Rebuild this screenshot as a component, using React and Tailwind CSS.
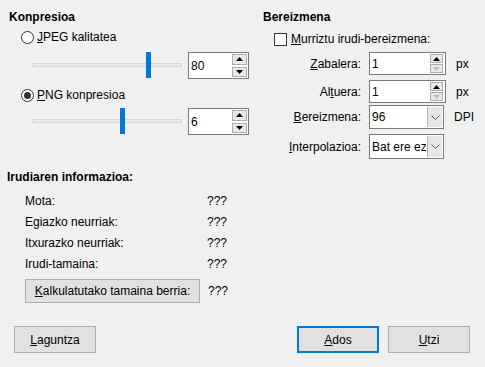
const Arrow = ({ up, muted }) => (
  <svg width="7" height="4" viewBox="0 0 7 4" className="block">
    <path d={up ? "M0 4 L3.5 0 L7 4 Z" : "M0 0 L3.5 4 L7 0 Z"} fill={muted ? "#bfbfbf" : "#000"} />
  </svg>
);

const Chevron = () => (
  <svg width="9" height="5" viewBox="0 0 9 5" className="block">
    <path d="M0.5 0.5 L4.5 4.5 L8.5 0.5" fill="none" stroke="#606060" strokeWidth="1" />
  </svg>
);

const SpinBox = ({ value, big }) => (
  <div
    className={
      big
        ? "flex h-[27px] w-[61px] border border-[#7a7a7a] bg-white"
        : "flex h-[23px] w-[77px] border border-[#7a7a7a] bg-white"
    }
  >
    <span className="flex flex-1 items-center pl-[2px] text-[12px]">{value}</span>
    <div className={big ? "flex w-[16px] flex-col gap-[2px] py-[1px] pr-[1px]" : "flex w-[15px] flex-col gap-[1px] py-[1px] pr-[2px]"}>
      <div className="flex flex-1 items-center justify-center border border-[#adadad] bg-[#e8e8e8]">
        <Arrow up />
      </div>
      <div className="flex flex-1 items-center justify-center border border-[#adadad] bg-[#e8e8e8]">
        <Arrow muted={!big} />
      </div>
    </div>
  </div>
);

const Dropdown = ({ value, height }) => (
  <div className={`flex w-[75px] border border-[#7a7a7a] bg-white ${height}`}>
    <span className="flex flex-1 items-center overflow-hidden whitespace-nowrap pl-[2px]">{value}</span>
    <div className="m-[1px] flex w-[15px] items-center justify-center border-l border-[#b5b5b5] bg-[#e6e6e6]">
      <Chevron />
    </div>
  </div>
);

const Slider = ({ pos }) => (
  <div className="relative h-[27px] w-[150px]">
    <div className="absolute left-0 right-0 top-[11px] h-[4px] border border-[#d6d6d6] bg-[#e7eaea]" />
    <div className="absolute top-0 h-[26px] w-[5px] bg-[#0078d7]" style={{ left: pos }} />
  </div>
);

const Radio = ({ checked }) => (
  <span className="flex h-[13px] w-[13px] items-center justify-center rounded-full border border-[#333] bg-white">
    {checked ? <span className="h-[7px] w-[7px] rounded-full bg-[#333]" /> : null}
  </span>
);

const FieldRow = ({ label, children, unit, className }) => (
  <div className={`flex items-center ${className}`}>
    <span className="w-[98px] text-right">{label}</span>
    <div className="ml-[8px]">{children}</div>
    {unit ? <span className="ml-[10px]">{unit}</span> : null}
  </div>
);

const Button = ({ children, primary, className = "" }) => (
  <button
    type="button"
    className={`h-[27px] w-[82px] bg-[#e1e1e1] text-[12px] ${
      primary ? "border-2 border-[#0078d7]" : "border border-[#adadad]"
    } ${className}`}
  >
    {children}
  </button>
);

const infoRows = ["Mota:", "Egiazko neurriak:", "Itxurazko neurriak:", "Irudi-tamaina:"];

export default function App() {
  return (
    <div className="h-[367px] w-[485px] overflow-hidden bg-[#f0f0f0] font-['Liberation_Sans',sans-serif] text-[12px] leading-4 text-black">
      <div className="flex h-[159px]">
        <div className="w-[263px] pl-[9px]">
          <div className="mt-[9px] h-4 font-bold">Konpresioa</div>
          <div className="mt-[4px] flex h-4 items-center gap-[3px] pl-[12px]">
            <Radio />
            <span>
              <u>J</u>PEG kalitatea
            </span>
          </div>
          <div className="mt-[7px] flex items-center gap-[6px] pl-[23px]">
            <Slider pos={114} />
            <SpinBox value="80" big />
          </div>
          <div className="mt-[8px] flex h-4 items-center gap-[3px] pl-[12px]">
            <Radio checked />
            <span>
              <u>P</u>NG konpresioa
            </span>
          </div>
          <div className="mt-[5px] flex items-center gap-[6px] pl-[23px]">
            <Slider pos={88} />
            <SpinBox value="6" big />
          </div>
        </div>
        <div className="flex-1">
          <div className="mt-[9px] h-4 font-bold">Bereizmena</div>
          <div className="mt-[6px] flex h-4 items-center gap-[4px] pl-[11px]">
            <span className="h-[13px] w-[13px] border border-[#333] bg-white" />
            <span>
              <u>M</u>urriztu irudi-bereizmena:
            </span>
          </div>
          <FieldRow
            className="mt-[5px]"
            label={
              <>
                <u>Z</u>abalera:
              </>
            }
            unit="px"
          >
            <SpinBox value="1" />
          </FieldRow>
          <FieldRow
            className="mt-[5px]"
            label={
              <>
                Al<u>t</u>uera:
              </>
            }
            unit="px"
          >
            <SpinBox value="1" />
          </FieldRow>
          <FieldRow
            className="mt-[2px]"
            label={
              <>
                <u>B</u>ereizmena:
              </>
            }
            unit="DPI"
          >
            <Dropdown value="96" height="h-[24px]" />
          </FieldRow>
          <FieldRow
            className="mt-[5px]"
            label={
              <>
                <u>I</u>nterpolazioa:
              </>
            }
          >
            <Dropdown value="Bat ere ez" height="h-[25px]" />
          </FieldRow>
        </div>
      </div>

      <div className="pl-[7px]">
        <div className="mt-[10px] h-4 font-bold">Irudiaren informazioa:</div>
        <div className="mt-[5px]">
          {infoRows.map((row) => (
            <div key={row} className="flex h-[21px] items-center pl-[18px]">
              <span className="w-[182px]">{row}</span>
              <span>???</span>
            </div>
          ))}
        </div>
        <div className="mt-[5px] flex items-center gap-[8px] pl-[18px]">
          <button type="button" className="h-[24px] w-[175px] border border-[#adadad] bg-[#e1e1e1]">
            <u>K</u>alkulatutako tamaina berria:
          </button>
          <span>???</span>
        </div>
      </div>

      <div className="mt-[23px] flex pl-[14px] pr-[15px]">
        <Button>
          <u>L</u>aguntza
        </Button>
        <div className="flex-1" />
        <Button primary>
          <u>A</u>dos
        </Button>
        <Button className="ml-[9px]">
          <u>U</u>tzi
        </Button>
      </div>
    </div>
  );
}
